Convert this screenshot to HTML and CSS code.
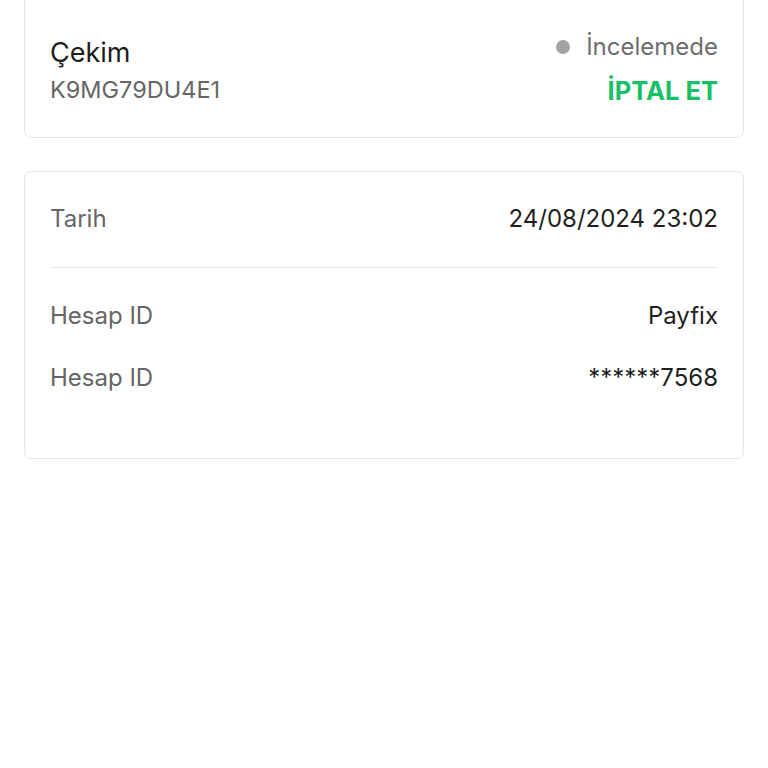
FILE: index.html
```html
<!DOCTYPE html>
<html lang="tr">

<head>
  <meta charset="UTF-8">
  <meta name="viewport" content="width=device-width, initial-scale=1.0">
  <title>Çekim Detayı</title>
  <link rel="stylesheet" href="styles.css">
</head>

<body>

  <div class="page">
    <div class="card summary_card">
      <div class="summary_left">
        <div class="summary_title">Çekim</div>
        <div class="summary_code">K9MG79DU4E1</div>
      </div>
      <div class="summary_right">
        <div class="status"><span class="status_dot"></span>İncelemede</div>
        <div class="cancel_btn">İPTAL ET</div>
      </div>
    </div>

    <div class="card detail_card">
      <div class="detail_row first_row">
        <span class="detail_label">Tarih</span>
        <span class="detail_value">24/08/2024 23:02</span>
      </div>
      <div class="divider"></div>
      <div class="detail_row">
        <span class="detail_label">Hesap ID</span>
        <span class="detail_value">Payfix</span>
      </div>
      <div class="detail_row">
        <span class="detail_label">Hesap ID</span>
        <span class="detail_value">******7568</span>
      </div>
    </div>
  </div>

</body>

</html>
```

FILE: styles.css
```css
body {
  margin: 0;
  font-family: Inter, "Noto Sans", Arial, sans-serif;
  background: #fff;
  color: #222;
}

.page {
  padding: 0 24px;
}

.card {
  border: 1px solid #e6e6e6;
  border-radius: 7px;
  background: #fff;
}

/* top card is scrolled a little out of view */
.summary_card {
  margin-top: -8px;
  padding: 36px 25px 28px 25px;
  display: flex;
  justify-content: space-between;
  align-items: flex-start;
}

.summary_left {
  padding-top: 5px;
}

.summary_title {
  font-size: 27px;
  line-height: 37px;
  color: #1d1d1d;
}

.summary_code {
  font-size: 23.5px;
  line-height: 37px;
  color: #666;
}

.summary_right {
  display: flex;
  flex-direction: column;
  align-items: flex-end;
  gap: 8px;
}

.status {
  display: flex;
  align-items: center;
  font-size: 24px;
  line-height: 36px;
  color: #6e6e6e;
}

.status_dot {
  width: 14px;
  height: 14px;
  border-radius: 50%;
  background: #a3a3a3;
  margin-right: 16px;
}

.cancel_btn {
  font-size: 25.5px;
  line-height: 36px;
  font-weight: 700;
  color: #16c066;
}

.detail_card {
  margin-top: 33px;
  padding: 0 25px 50px 25px;
}

.detail_row {
  display: flex;
  justify-content: space-between;
  align-items: center;
  height: 62px;
  font-size: 24px;
}

.first_row {
  height: 48px;
  margin-top: 22px;
}

.detail_label {
  color: #666;
}

.detail_value {
  color: #1f1f1f;
}

.divider {
  height: 1px;
  background: #e6e6e6;
  margin: 25px 0 16px 0;
}
```
